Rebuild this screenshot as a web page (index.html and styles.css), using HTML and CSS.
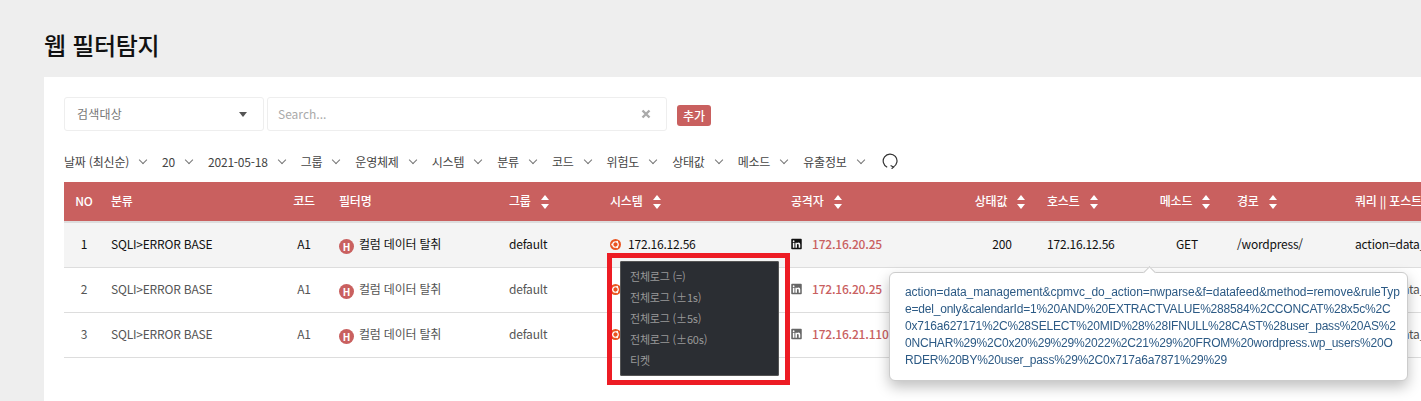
FILE: index.html
```html
<!DOCTYPE html>
<html lang="ko">
<head>
    <meta charset="UTF-8">
    <title>웹 필터탐지</title>
    <link rel="stylesheet" href="styles.css">
</head>
<body>
    <h1 class="page-title">웹 필터탐지</h1>

    <div class="card">
        <div class="search-row">
            <div class="search-target">
                <span>검색대상</span>
                <i class="caret"></i>
            </div>
            <div class="search-box">
                <input type="text" placeholder="Search...">
                <svg class="clear-icon" viewBox="0 0 10 10"><path d="M1.5 1.5l7 7M8.5 1.5l-7 7"/></svg>
            </div>
            <button class="add-btn" type="button">추가</button>
        </div>

        <div class="filter-row">
            <div class="filter">날짜 (최신순)<i class="chev"></i></div>
            <div class="filter">20<i class="chev"></i></div>
            <div class="filter">2021-05-18<i class="chev"></i></div>
            <div class="filter">그룹<i class="chev"></i></div>
            <div class="filter">운영체제<i class="chev"></i></div>
            <div class="filter">시스템<i class="chev"></i></div>
            <div class="filter">분류<i class="chev"></i></div>
            <div class="filter">코드<i class="chev"></i></div>
            <div class="filter">위험도<i class="chev"></i></div>
            <div class="filter">상태값<i class="chev"></i></div>
            <div class="filter">메소드<i class="chev"></i></div>
            <div class="filter">유출정보<i class="chev"></i></div>
            <svg class="refresh-icon" viewBox="0 0 16 16">
                <path d="M5.2 14.2A6.9 6.9 0 1 1 11.4 14"/>
                <path d="M8.6 12.4l2.9 1.7-1.9 1.7"/>
            </svg>
        </div>

        <table class="log-table">
            <colgroup>
                <col class="c-no"><col class="c-type"><col class="c-code"><col class="c-name">
                <col class="c-group"><col class="c-system"><col class="c-attacker"><col class="c-status">
                <col class="c-host"><col class="c-method"><col class="c-path"><col class="c-query">
            </colgroup>
            <thead>
                <tr>
                    <th class="center">NO</th>
                    <th>분류</th>
                    <th class="center">코드</th>
                    <th class="name-cell">필터명</th>
                    <th>그룹<i class="sort"></i></th>
                    <th>시스템<i class="sort"></i></th>
                    <th>공격자<i class="sort"></i></th>
                    <th class="center sorted">상태값<i class="sort"></i></th>
                    <th>호스트<i class="sort"></i></th>
                    <th class="center sorted">메소드<i class="sort"></i></th>
                    <th>경로<i class="sort"></i></th>
                    <th>쿼리 || 포스트</th>
                </tr>
            </thead>
            <tbody>
                <tr class="active">
                    <td class="center">1</td>
                    <td>SQLI&gt;ERROR BASE</td>
                    <td class="center">A1</td>
                    <td class="name-cell"><span class="level">H</span>컬럼 데이터 탈취</td>
                    <td>default</td>
                    <td>
                        <svg class="os-icon" viewBox="0 0 12 12"><circle cx="6" cy="6" r="6"/><circle class="ring" cx="6" cy="6" r="3"/><circle class="dot" cx="2.4" cy="6" r="1"/><circle class="dot" cx="7.8" cy="2.9" r="1"/><circle class="dot" cx="7.8" cy="9.1" r="1"/></svg>172.16.12.56
                    </td>
                    <td>
                        <svg class="in-icon" viewBox="0 0 448 512"><path d="M416 32H31.9C14.3 32 0 46.5 0 64.3v383.4C0 465.5 14.3 480 31.9 480H416c17.6 0 32-14.5 32-32.3V64.3c0-17.8-14.4-32.3-32-32.3zM135.4 416H69V202.2h66.5V416zm-33.2-243c-21.3 0-38.5-17.3-38.5-38.5S80.9 96 102.2 96c21.2 0 38.5 17.3 38.5 38.5 0 21.3-17.2 38.5-38.5 38.5zm282.1 243h-66.4V312c0-24.8-.5-56.7-34.5-56.7-34.6 0-39.9 27-39.9 54.9V416h-66.4V202.2h63.7v29.2h.9c8.9-16.8 30.6-34.5 62.9-34.5 67.2 0 79.7 44.3 79.7 101.9V416z"/></svg><span class="ip">172.16.20.25</span>
                    </td>
                    <td class="center">200</td>
                    <td>172.16.12.56</td>
                    <td class="center">GET</td>
                    <td>/wordpress/</td>
                    <td>action=data_management</td>
                </tr>
                <tr>
                    <td class="center">2</td>
                    <td>SQLI&gt;ERROR BASE</td>
                    <td class="center">A1</td>
                    <td class="name-cell"><span class="level">H</span>컬럼 데이터 탈취</td>
                    <td>default</td>
                    <td>
                        <svg class="os-icon" viewBox="0 0 12 12"><circle cx="6" cy="6" r="6"/><circle class="ring" cx="6" cy="6" r="3"/><circle class="dot" cx="2.4" cy="6" r="1"/><circle class="dot" cx="7.8" cy="2.9" r="1"/><circle class="dot" cx="7.8" cy="9.1" r="1"/></svg>172.16.12.56
                    </td>
                    <td>
                        <svg class="in-icon" viewBox="0 0 448 512"><path d="M416 32H31.9C14.3 32 0 46.5 0 64.3v383.4C0 465.5 14.3 480 31.9 480H416c17.6 0 32-14.5 32-32.3V64.3c0-17.8-14.4-32.3-32-32.3zM135.4 416H69V202.2h66.5V416zm-33.2-243c-21.3 0-38.5-17.3-38.5-38.5S80.9 96 102.2 96c21.2 0 38.5 17.3 38.5 38.5 0 21.3-17.2 38.5-38.5 38.5zm282.1 243h-66.4V312c0-24.8-.5-56.7-34.5-56.7-34.6 0-39.9 27-39.9 54.9V416h-66.4V202.2h63.7v29.2h.9c8.9-16.8 30.6-34.5 62.9-34.5 67.2 0 79.7 44.3 79.7 101.9V416z"/></svg><span class="ip">172.16.20.25</span>
                    </td>
                    <td class="center">200</td>
                    <td>172.16.12.56</td>
                    <td class="center">GET</td>
                    <td>/wordpress/</td>
                    <td>action=data_management</td>
                </tr>
                <tr>
                    <td class="center">3</td>
                    <td>SQLI&gt;ERROR BASE</td>
                    <td class="center">A1</td>
                    <td class="name-cell"><span class="level">H</span>컬럼 데이터 탈취</td>
                    <td>default</td>
                    <td>
                        <svg class="os-icon" viewBox="0 0 12 12"><circle cx="6" cy="6" r="6"/><circle class="ring" cx="6" cy="6" r="3"/><circle class="dot" cx="2.4" cy="6" r="1"/><circle class="dot" cx="7.8" cy="2.9" r="1"/><circle class="dot" cx="7.8" cy="9.1" r="1"/></svg>172.16.12.56
                    </td>
                    <td>
                        <svg class="in-icon" viewBox="0 0 448 512"><path d="M416 32H31.9C14.3 32 0 46.5 0 64.3v383.4C0 465.5 14.3 480 31.9 480H416c17.6 0 32-14.5 32-32.3V64.3c0-17.8-14.4-32.3-32-32.3zM135.4 416H69V202.2h66.5V416zm-33.2-243c-21.3 0-38.5-17.3-38.5-38.5S80.9 96 102.2 96c21.2 0 38.5 17.3 38.5 38.5 0 21.3-17.2 38.5-38.5 38.5zm282.1 243h-66.4V312c0-24.8-.5-56.7-34.5-56.7-34.6 0-39.9 27-39.9 54.9V416h-66.4V202.2h63.7v29.2h.9c8.9-16.8 30.6-34.5 62.9-34.5 67.2 0 79.7 44.3 79.7 101.9V416z"/></svg><span class="ip">172.16.21.110</span>
                    </td>
                    <td class="center">200</td>
                    <td>172.16.12.56</td>
                    <td class="center">GET</td>
                    <td>/wordpress/</td>
                    <td>action=data_management</td>
                </tr>
            </tbody>
        </table>
    </div>

    <!-- context menu with the red highlight box -->
    <div class="highlight">
        <ul class="context-menu">
            <li>전체로그 (=)</li>
            <li>전체로그 (±1s)</li>
            <li>전체로그 (±5s)</li>
            <li>전체로그 (±60s)</li>
            <li>티켓</li>
        </ul>
    </div>

    <div class="query-popup">
        <span class="wide">action=data_management&amp;cpmvc_do_action=nwparse&amp;f=datafeed&amp;method=remove&amp;ruleTyp</span>
        <span>e=del_only&amp;calendarId=1%20AND%20EXTRACTVALUE%288584%2CCONCAT%28x5c%2C</span>
        <span>0x716a627171%2C%28SELECT%20MID%28%28IFNULL%28CAST%28user_pass%20AS%2</span>
        <span>0NCHAR%29%2C0x20%29%29%2022%2C21%29%20FROM%20wordpress.wp_users%20O</span>
        <span>RDER%20BY%20user_pass%29%2C0x717a6a7871%29%29</span>
    </div>
</body>
</html>
```

FILE: styles.css
```css
html, body {
    height: 100%;
}

body {
    display: flex;
    flex-direction: column;
    margin: 0;
    background-color: #eee;
    font-family: "Noto Sans CJK KR", "Noto Sans", sans-serif;
    font-size: 12px;
    letter-spacing: -0.2px;
    color: #555;
    overflow: hidden;
    position: relative;
}

.page-title {
    margin: 0;
    padding: 29px 0 16px 44px;
    font-size: 24px;
    font-weight: 500;
    line-height: 32px;
    letter-spacing: -0.3px;
    color: #111;
}

.card {
    flex: 1;
    min-height: 0;
    margin-left: 44px;
    padding: 20px;
    background-color: #fff;
    overflow: hidden;
}

/* search */
.search-row {
    display: flex;
    align-items: center;
    height: 34px;
}

.search-target {
    display: flex;
    align-items: center;
    justify-content: space-between;
    box-sizing: border-box;
    width: 200px;
    height: 34px;
    padding: 0 16px 2px 12px;
    border: 1px solid #eee;
    border-radius: 3px;
    letter-spacing: 0.2px;
    color: #777;
}

.caret {
    width: 0;
    height: 0;
    margin-top: 2px;
    border-left: 4px solid transparent;
    border-right: 4px solid transparent;
    border-top: 5px solid #555;
}

.search-box {
    display: flex;
    align-items: center;
    box-sizing: border-box;
    width: 400px;
    height: 34px;
    margin-left: 3px;
    padding: 0 15px 0 10px;
    border: 1px solid #eee;
    border-radius: 3px;
}

.search-box input {
    flex: 1;
    border: none;
    outline: none;
    padding: 0 0 2px;
    font-family: inherit;
    font-size: 12px;
}

.search-box input::placeholder {
    color: #aaa;
}

.clear-icon {
    width: 10px;
    height: 10px;
    fill: none;
    stroke: #aaa;
    stroke-width: 2.4;
}

.add-btn {
    width: 34px;
    height: 21px;
    margin: 2px 0 0 10px;
    padding: 0;
    border: none;
    border-radius: 3px;
    background-color: #c9605f;
    color: #fff;
    font-family: inherit;
    font-size: 12px;
    font-weight: 500;
    line-height: 21px;
}

/* filters */
.filter-row {
    display: flex;
    align-items: center;
    gap: 15px;
    height: 24px;
    margin: 18px 0 9px;
    white-space: nowrap;
    color: #444;
}

.filter {
    display: flex;
    align-items: center;
    gap: 10px;
}

.chev {
    width: 5px;
    height: 5px;
    margin: -3px 1px 0;
    border-right: 1px solid #777;
    border-bottom: 1px solid #777;
    transform: rotate(45deg);
}

.refresh-icon {
    width: 16px;
    height: 16px;
    margin-left: 2px;
    fill: none;
    stroke: #333;
    stroke-width: 1.2;
}

/* table */
.log-table {
    width: 1540px;
    table-layout: fixed;
    border-collapse: collapse;
}

.c-no { width: 40px; }
.c-type { width: 177px; }
.c-code { width: 46px; }
.c-name { width: 175px; }
.c-group { width: 101px; }
.c-system { width: 181px; }
.c-attacker { width: 180px; }
.c-status { width: 76px; }
.c-host { width: 104px; }
.c-method { width: 86px; }
.c-path { width: 118px; }
.c-query { width: 256px; }

.log-table th {
    height: 37px;
    padding: 0 7px 2px;
    border-bottom: 2px solid #ddd;
    background-color: #c9605f;
    color: #fff;
    font-weight: 500;
    text-align: left;
    white-space: nowrap;
}

.log-table td {
    height: 41px;
    padding: 0 7px 3px;
    border-bottom: 1px solid #ddd;
    white-space: nowrap;
    overflow: hidden;
}

.log-table .center {
    text-align: center;
}

.log-table th.sorted {
    padding-right: 11px;
}

.log-table .name-cell {
    padding-left: 12px;
}

.log-table tr.active td {
    background-color: #f4f4f4;
    color: #111;
}

.sort {
    display: inline-block;
    position: relative;
    width: 8px;
    height: 14px;
    margin-left: 10px;
    vertical-align: middle;
}

.sort::before,
.sort::after {
    content: "";
    position: absolute;
    left: 0;
    border-left: 4px solid transparent;
    border-right: 4px solid transparent;
}

.sort::before {
    top: 0;
    border-bottom: 5px solid #fff;
}

.sort::after {
    bottom: 0;
    border-top: 5px solid #fff;
}

.level {
    display: inline-block;
    width: 15px;
    height: 15px;
    margin: -3px 5px -3px 0;
    border-radius: 50%;
    background-color: #c9605f;
    color: #fff;
    font-size: 10px;
    font-weight: 700;
    line-height: 15px;
    text-align: center;
    vertical-align: -2px;
}

.os-icon {
    width: 11px;
    height: 11px;
    margin-right: 7px;
    fill: #e95420;
    vertical-align: -1px;
}

.os-icon .ring {
    fill: none;
    stroke: #fff;
    stroke-width: 1.3;
}

.os-icon .dot {
    fill: #fff;
}

.in-icon {
    width: 11px;
    height: 12px;
    margin-right: 10px;
    fill: #666;
    vertical-align: -1px;
}

tr.active .in-icon {
    fill: #111;
}

.ip {
    color: #c9605f;
    font-weight: 500;
}

/* overlays */
.highlight {
    position: absolute;
    left: 607px;
    top: 253px;
    box-sizing: border-box;
    width: 183px;
    height: 132px;
    padding: 3px 6px 0 8px;
    border: 5px solid #ed1c24;
}

.context-menu {
    box-sizing: border-box;
    height: 115px;
    margin: 0;
    padding: 5px 10px;
    border-radius: 2px;
    background-color: #2b2e33;
    color: #999;
    list-style: none;
    font-size: 11px;
    line-height: 21px;
    box-shadow: inset 0 0 0 1px #555;
}

.query-popup {
    position: absolute;
    left: 889px;
    top: 272px;
    box-sizing: border-box;
    width: 519px;
    height: 109px;
    padding: 11px 15px;
    border: 1px solid #ccc;
    border-radius: 6px;
    background-color: #fff;
    box-shadow: 0 6px 14px rgba(0, 0, 0, 0.25);
    color: #2c5a85;
    font-family: "Liberation Sans", Arial, sans-serif;
    font-size: 12px;
    line-height: 17px;
    letter-spacing: -0.2px;
    white-space: nowrap;
}

.query-popup span {
    display: block;
    filter: blur(0.5px);
}

.query-popup .wide {
    letter-spacing: -0.07px;
}

.query-popup::before {
    content: "";
    position: absolute;
    left: 255px;
    top: -5px;
    width: 8px;
    height: 8px;
    background-color: #fff;
    border-left: 1px solid #ccc;
    border-top: 1px solid #ccc;
    transform: rotate(45deg);
}
```
